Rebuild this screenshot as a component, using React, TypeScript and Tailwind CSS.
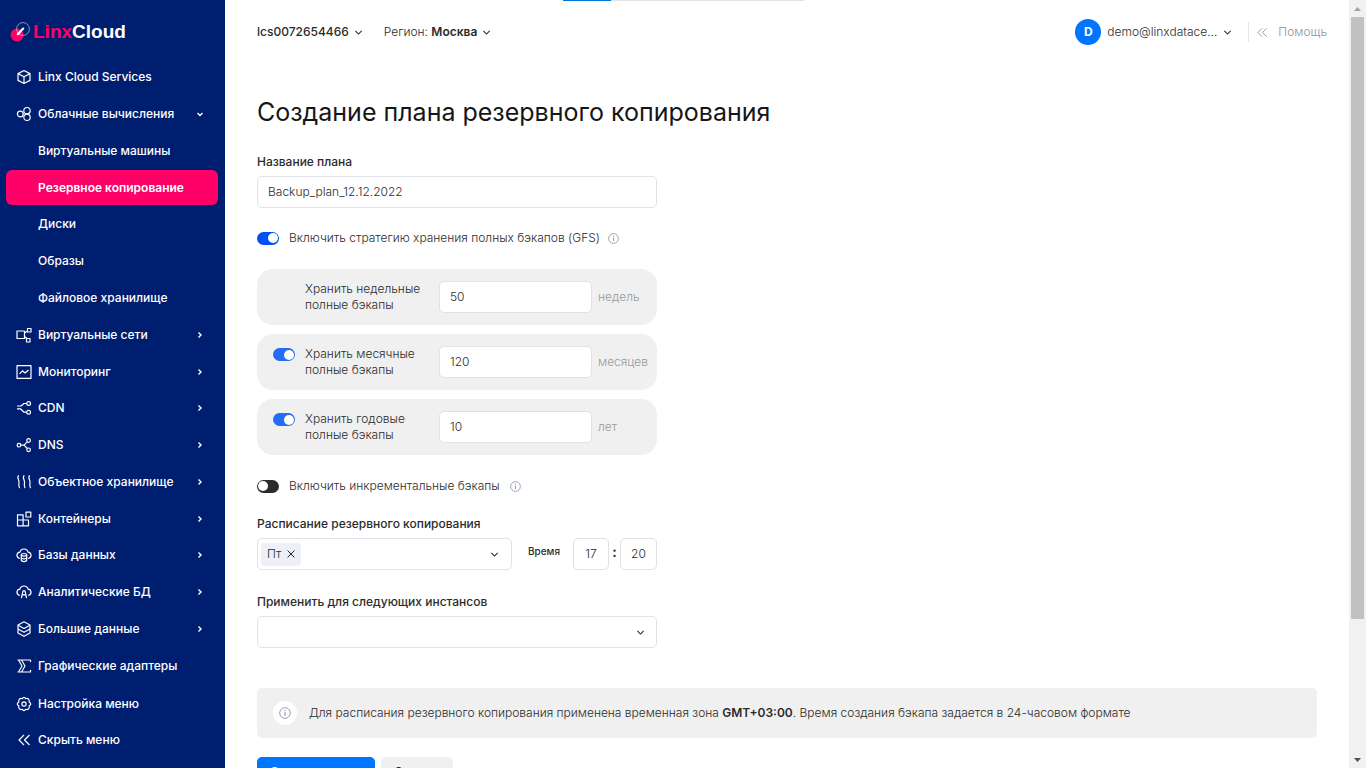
import React, { useState } from "react";

type IconName =
  | "cube" | "circles" | "network" | "chart" | "cdn" | "dns" | "waves" | "blocks"
  | "clouddb" | "clouda" | "layers" | "sigma" | "gear" | "hide";

const gearPath =
  "M8 1.300Q9 1.300 9.600 2.700 11.300 2 12.700 3.300 13.600 4.200 13.100 6 14.700 6.800 14.700 8 14.700 9.200 13.100 10 13.600 11.800 12.700 12.700 11.300 14 9.600 13.300 9 14.700 8 14.700 7 14.700 6.400 13.300 4.700 14 3.300 12.700 2.400 11.800 2.900 10 1.300 9.200 1.300 8 1.300 6.800 2.900 6 2.400 4.200 3.300 3.300 4.700 2 6.400 2.700 7 1.300 8 1.300Z";

function Icon({ name }: { name: IconName }) {
  const shapes: Record<IconName, React.ReactNode> = {
    cube: <><path d="M8 1.500 14 4.600v6.800L8 14.500l-6-3.100V4.600Z" /><path d="m2 4.600 6 3.200 6-3.200M8 7.800v6.700" /></>,
    circles: <><circle cx="4.300" cy="8" r="2.900" /><circle cx="11" cy="4.700" r="3.200" /><circle cx="11" cy="11.300" r="3.200" /></>,
    network: <><path d="M1 4h7.500v7.500H1zM11.500 1.500H15V5h-3.500zM10.500 11.500H14V15h-3.500zM8.500 6l3-2M8.500 9.500l2.500 2" /></>,
    chart: <><path d="M1 1.600h14v12.800H1z" /><path d="m3.500 9.800 3-3 2.500 2.200 3.500-3" /></>,
    cdn: <><path d="M1 6h4l3-2.500h2.500M1 8.800h3.500l3.500 3.400h2.500" /><circle cx="12.600" cy="3.500" r="1.900" /><circle cx="12.600" cy="12.200" r="1.900" /></>,
    dns: <><circle cx="3" cy="8.200" r="1.800" /><circle cx="12.600" cy="3.500" r="1.800" /><circle cx="12.600" cy="12.800" r="1.800" /><path d="M4.800 8.200H8l3.300-3.400M8 8.200l3.300 3.300" /></>,
    waves: <path d="M3 1.800H2.200c-1.100 2.500.8 4.200.8 6.200s-.8 4.400.6 6.200M8.500 1.800h-.8c-1.100 2.500.8 4.200.8 6.200s-.8 4.400.6 6.200M14 1.800h-.8c-1.100 2.500.8 4.200.8 6.200s-.8 4.400.6 6.200" />,
    blocks: <path d="M1.500 3.800h5.600v11H1.500zM1.500 9h11v5.800H7.100M10 1.200h4.800V6H10z" />,
    clouddb: <><path d="M3.800 11.500C-.4 10.200.4 5.500 4 5.200c.7-4.300 7.300-4.300 8 0 3.600.3 4.400 5 .2 6.300" /><ellipse cx="8" cy="7.800" rx="2.700" ry="1.300" /><path d="M5.300 7.800v5.300c0 1.900 5.400 1.900 5.400 0V7.800M5.300 10.600c0 1.600 5.400 1.600 5.400 0" /></>,
    clouda: <><path d="M3.800 11.500C-.4 10.200.4 5.500 4 5.200c.7-4.300 7.300-4.300 8 0 3.600.3 4.400 5 .2 6.300" /><path d="M5.400 14.200 7 6.800h2l1.600 7.400M6.400 10.800h3.200" /></>,
    layers: <><path d="M8 .8 14 4v8l-6 3.300L2 12V4Z" /><path d="m2 4.300 6 3.200 6-3.200M2 8l6 3.200L14 8" /></>,
    sigma: <path d="M14.500 4V2H5.500l3.500 6-3.500 6h9v-2M1.500 2h1l3.500 6-3.500 6h-1M2.500 2h3M2.500 14h3" />,
    gear: <><path d={gearPath} /><circle cx="8" cy="8" r="2.100" /></>,
    hide: <path d="M8 3 3 8l5 5M13.500 3l-5 5 5 5" />,
  };
  return (
    <svg viewBox="0 0 16 16" className="size-4 shrink-0" fill="none" stroke="currentColor" strokeWidth="1.200" strokeLinejoin="round" aria-hidden="true">
      {shapes[name]}
    </svg>
  );
}

function Chevron({ className }: { className: string }) {
  return (
    <svg viewBox="0 0 10 10" className={className} fill="none" stroke="currentColor" strokeWidth="1.200" aria-hidden="true">
      <path d="M1.500 3.300 5 6.700l3.500-3.400" />
    </svg>
  );
}

function MenuArrow({ down }: { down: boolean }) {
  return (
    <svg viewBox="0 0 8 8" className="mr-[14px] size-2" fill="none" stroke="currentColor" strokeWidth="1.400" aria-hidden="true">
      <path d={down ? "M1.500 3 4 5.500 6.500 3" : "M2.500 1.500 5 4 2.500 6.500"} />
    </svg>
  );
}

function Info({ className }: { className: string }) {
  return (
    <svg viewBox="0 0 12 12" className={className} fill="none" stroke="currentColor" aria-hidden="true">
      <circle cx="6" cy="6" r="5.300" strokeWidth="0.900" />
      <path d="M6 5.200v3.600M6 3.100v1.100" strokeWidth="1.100" />
    </svg>
  );
}

type Item = { label: string; icon?: IconName; arrow?: "down" | "right"; active?: boolean };

const items: Item[] = [
  { label: "Linx Cloud Services", icon: "cube" },
  { label: "Облачные вычисления", icon: "circles", arrow: "down" },
  { label: "Виртуальные машины" },
  { label: "Резервное копирование", active: true },
  { label: "Диски" },
  { label: "Образы" },
  { label: "Файловое хранилище" },
  { label: "Виртуальные сети", icon: "network", arrow: "right" },
  { label: "Мониторинг", icon: "chart", arrow: "right" },
  { label: "CDN", icon: "cdn", arrow: "right" },
  { label: "DNS", icon: "dns", arrow: "right" },
  { label: "Объектное хранилище", icon: "waves", arrow: "right" },
  { label: "Контейнеры", icon: "blocks", arrow: "right" },
  { label: "Базы данных", icon: "clouddb", arrow: "right" },
  { label: "Аналитические БД", icon: "clouda", arrow: "right" },
  { label: "Большие данные", icon: "layers", arrow: "right" },
  { label: "Графические адаптеры", icon: "sigma" },
];

function Sidebar() {
  return (
    <aside className="flex w-[225px] shrink-0 flex-col bg-[#001e70] text-xs font-medium text-white">
      <a href="#" className="flex h-[59px] shrink-0 items-center gap-[3px] pt-1 pl-[10px]">
        <svg viewBox="0 0 20 20" className="size-5" fill="none" aria-hidden="true">
          <circle cx="7" cy="13" r="6.500" fill="#ff0068" />
          <circle cx="13" cy="7" r="6.400" stroke="#b9c3e4" strokeWidth="0.700" />
          <path d="m7.800 12.200 5.400-5.600" stroke="#fff" strokeWidth="2.200" strokeLinecap="round" />
        </svg>
        <span className="font-['Liberation_Sans',sans-serif] text-[19px] font-bold">
          <span className="text-[#ff0068]">Linx</span>Cloud
        </span>
      </a>
      <nav className="flex flex-1 flex-col">
        {items.map((item) => (
          <div key={item.label} className="flex min-h-6 flex-1 py-px pr-[7px] pl-[6px]">
            <a
              href="#"
              className={
                "flex flex-1 items-center rounded-md pl-[10px] " +
                (item.active ? "bg-[#ff0068] font-semibold" : "")
              }
            >
              <span className="flex w-[22px] shrink-0">{item.icon && <Icon name={item.icon} />}</span>
              <span className="flex-1 whitespace-nowrap">{item.label}</span>
              {item.arrow && <MenuArrow down={item.arrow === "down"} />}
            </a>
          </div>
        ))}
      </nav>
      <div className="flex shrink-0 flex-col pt-0.5 pb-[10px] pl-4">
        <button type="button" className="flex h-9 items-center gap-[6px]"><Icon name="gear" />Настройка меню</button>
        <button type="button" className="flex h-9 items-center gap-[6px]"><Icon name="hide" />Скрыть меню</button>
      </div>
    </aside>
  );
}

function Header() {
  return (
    <header className="flex h-16 items-center">
      <button type="button" className="flex items-center gap-[5px] font-medium"><span>lcs0072654466</span><Chevron className="size-[9px]" /></button>
      <button type="button" className="ml-[21px] flex items-center gap-[5px]">
        <span className="font-light">Регион: <span className="font-semibold">Москва</span></span>
        <Chevron className="size-[9px]" />
      </button>
      <button type="button" className="ml-auto flex items-center gap-[6px]">
        <span className="flex size-[26px] items-center justify-center rounded-full bg-[#0075ff] font-bold text-white">D</span>
        <span className="font-light">demo@linxdatace...</span>
        <Chevron className="size-[9px]" />
      </button>
      <button type="button" className="mr-[-10px] ml-4 flex h-5 items-center border-l border-[#e2e4ee] pl-2 font-light text-[#8b96a3]">
        <svg viewBox="0 0 12 12" className="mr-[10px] size-[11px]" fill="none" stroke="currentColor" aria-hidden="true"><path d="M5.500 1.500 1 6l4.500 4.500M10.500 1.500 6 6l4.500 4.500" /></svg>
        Помощь
      </button>
    </header>
  );
}

function Toggle({ id, checked, color, label, onChange }: { id: string; checked: boolean; color: string; label?: string; onChange: () => void }) {
  return (
    <input
      id={id}
      type="checkbox"
      checked={checked}
      onChange={onChange}
      aria-label={label}
      className={
        "flex h-[13px] w-[22px] shrink-0 cursor-pointer appearance-none items-center rounded-full bg-[#2b2b2b] p-px before:size-[10px] before:rounded-full before:bg-white checked:justify-end " + color
      }
    />
  );
}

const box = "h-8 rounded-[5px] border border-[#e1e2e8] bg-white font-light outline-none";
const periods = [
  { id: "weeks", name: "недельные", value: "50", unit: "недель", toggle: false },
  { id: "months", name: "месячные", value: "120", unit: "месяцев", toggle: true },
  { id: "years", name: "годовые", value: "10", unit: "лет", toggle: true },
];

function PlanForm() {
  const [gfs, setGfs] = useState(true);
  const [incremental, setIncremental] = useState(false);
  const [enabled, setEnabled] = useState<Record<string, boolean>>({ months: true, years: true });
  const [day, setDay] = useState(true);
  return (
    <form onSubmit={(e) => e.preventDefault()}>
      <div className="max-w-[400px]">
        <label htmlFor="plan" className="mt-[22px] block h-[22px] font-medium">Название плана</label>
        <input id="plan" defaultValue="Backup_plan_12.12.2022" className={box + " w-full px-[10px] pb-0.5"} />

        <div className="mt-[22px] flex h-4 items-center">
          <Toggle id="gfs" checked={gfs} color="checked:bg-[#0050f5]" onChange={() => setGfs(!gfs)} />
          <label htmlFor="gfs" className="ml-[10px] font-light">Включить стратегию хранения полных бэкапов (GFS)</label>
          <Info className="ml-2 size-[11px] text-[#8793a6]" />
        </div>

        <div className="mt-[23px] flex flex-col gap-[9px]">
          {periods.map((p) => (
            <div key={p.id} className="flex h-14 items-center rounded-2xl bg-[#f0f0f0] pl-4">
              <div className="flex w-8 shrink-0 self-start pt-[14px]">
                {p.toggle && (
                  <Toggle
                    id={p.id + "-on"}
                    label={"Хранить " + p.name + " полные бэкапы"}
                    checked={enabled[p.id]}
                    color="checked:bg-[#246bf7]"
                    onChange={() => setEnabled({ ...enabled, [p.id]: !enabled[p.id] })}
                  />
                )}
              </div>
              <label htmlFor={p.id} className="w-[134px] shrink-0 leading-4 font-light">
                Хранить {p.name}<br />полные бэкапы
              </label>
              <input id={p.id} defaultValue={p.value} className={box + " w-[153px] px-[10px] pb-0.5"} />
              <span className="ml-[6px] font-light text-[#999]">{p.unit}</span>
            </div>
          ))}
        </div>

        <div className="mt-[23px] flex h-4 items-center">
          <Toggle id="incremental" checked={incremental} color="checked:bg-[#0050f5]" onChange={() => setIncremental(!incremental)} />
          <label htmlFor="incremental" className="ml-[10px] font-light">Включить инкрементальные бэкапы</label>
          <Info className="ml-[10px] size-[11px] text-[#8793a6]" />
        </div>

        <div className="mt-[22px] h-[22px] font-medium">Расписание резервного копирования</div>
        <div className="flex">
          <div className={box + " flex flex-1 items-center pl-[3px]"}>
            {day && (
              <span className="flex h-[23px] items-center gap-[6px] rounded-[3px] bg-[#edf1f7] px-[6px]">
                Пт
                <button type="button" aria-label="Удалить Пт" onClick={() => setDay(false)}>
                  <svg viewBox="0 0 8 8" className="size-2" stroke="#222" aria-hidden="true"><path d="m.6.6 6.800 6.800M7.400.6.6 7.400" /></svg>
                </button>
              </span>
            )}
            <button type="button" aria-label="Выбрать день" onClick={() => setDay(true)} className="ml-auto px-3"><Chevron className="size-[9px]" /></button>
          </div>
          <label htmlFor="hour" className="ml-4 w-[45px] pt-[5px] text-[10px] leading-4 font-medium">Время</label>
          <input id="hour" defaultValue="17" className={box + " w-9 pb-0.5 text-center"} />
          <span className="w-[11px] pt-1 text-center text-sm font-semibold">:</span>
          <input aria-label="Минуты" defaultValue="20" className={box + " w-[37px] pb-0.5 text-center"} />
        </div>

        <label htmlFor="instances" className="mt-6 block h-[22px] font-medium">Применить для следующих инстансов</label>
        <div className="relative">
          <select id="instances" className={box + " block w-full appearance-none px-[10px]"}><option></option></select>
          <Chevron className="pointer-events-none absolute top-3 right-3 size-[9px]" />
        </div>
      </div>

      <div className="mt-10 flex h-[50px] items-center rounded-[5px] bg-[#f0f0f0] pl-4">
        <span className="mr-3 flex size-6 items-center justify-center rounded-full bg-white text-[#8793a6]"><Info className="size-3" /></span>
        <p className="font-light">Для расписания резервного копирования применена временная зона <b className="font-semibold">GMT+03:00</b>. Время создания бэкапа задается в 24-часовом формате</p>
      </div>

      <div className="mt-[19px] flex gap-[6px]">
        <button type="submit" className="h-[30px] w-[118px] rounded-[5px] bg-[#0075ff] px-[13px] text-left font-medium text-white">Создать план</button>
        <button type="button" className="h-[30px] rounded-[5px] bg-[#f0f0f0] px-[13px] font-medium">Отмена</button>
      </div>
    </form>
  );
}

export default function App() {
  return (
    <div className="flex h-screen overflow-hidden bg-white font-['Inter',sans-serif] text-xs text-[#2b2b2b]">
      <Sidebar />
      <main className="relative min-w-0 flex-1 overflow-hidden px-8">
        <div className="absolute top-0 left-[338px] flex h-px w-[241px] bg-[#e3e3e3]"><div className="w-1/5 bg-[#0075d9]" /></div>
        <Header />
        <h1 className="mt-7 text-[25px] leading-10 text-[#161616]">Создание плана резервного копирования</h1>
        <PlanForm />
      </main>
      <div className="flex w-[17px] shrink-0 flex-col items-center bg-[#f1f1f1]" aria-hidden="true">
        <svg viewBox="0 0 17 17" className="size-[17px] shrink-0"><path d="M5 11h7L8.500 7Z" fill="#a3a3a3" /></svg>
        <div className="h-[602px] w-[13px] bg-[#c1c1c1]" />
        <svg viewBox="0 0 17 17" className="mt-auto size-[17px] shrink-0"><path d="M5 7h7l-3.500 4Z" fill="#505050" /></svg>
      </div>
    </div>
  );
}
